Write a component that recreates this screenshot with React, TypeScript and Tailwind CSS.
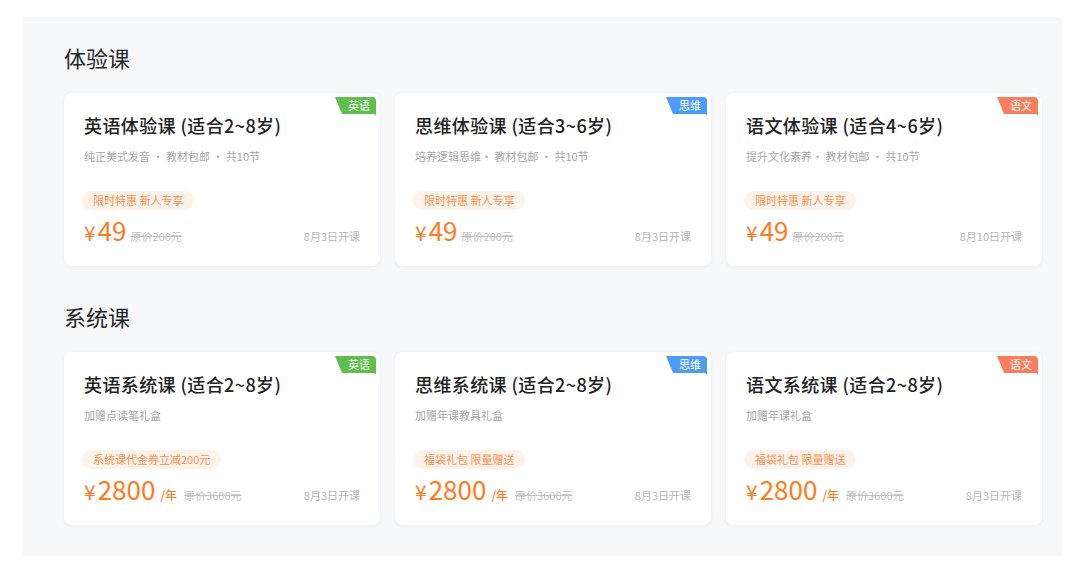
import React from "react";

type Course = {
  title: string;
  sub: string;
  pill: string;
  price: string;
  perYear?: boolean;
  orig: string;
  date: string;
  tag: string;
  tagColor: string;
};

const trial: Course[] = [
  { title: "英语体验课 (适合2~8岁)", sub: "纯正美式发音 · 教材包邮 · 共10节", pill: "限时特惠 新人专享", price: "49", orig: "原价200元", date: "8月3日开课", tag: "英语", tagColor: "#5fbf4e" },
  { title: "思维体验课 (适合3~6岁)", sub: "培养逻辑思维· 教材包邮 · 共10节", pill: "限时特惠 新人专享", price: "49", orig: "原价200元", date: "8月3日开课", tag: "思维", tagColor: "#4c9cf6" },
  { title: "语文体验课 (适合4~6岁)", sub: "提升文化素养· 教材包邮 · 共10节", pill: "限时特惠 新人专享", price: "49", orig: "原价200元", date: "8月10日开课", tag: "语文", tagColor: "#f97e5e" },
];

const system: Course[] = [
  { title: "英语系统课 (适合2~8岁)", sub: "加赠点读笔礼盒", pill: "系统课代金券立减200元", price: "2800", perYear: true, orig: "原价3600元", date: "8月3日开课", tag: "英语", tagColor: "#5fbf4e" },
  { title: "思维系统课 (适合2~8岁)", sub: "加赠年课教具礼盒", pill: "福袋礼包 限量赠送", price: "2800", perYear: true, orig: "原价3600元", date: "8月3日开课", tag: "思维", tagColor: "#4c9cf6" },
  { title: "语文系统课 (适合2~8岁)", sub: "加赠年课礼盒", pill: "福袋礼包 限量赠送", price: "2800", perYear: true, orig: "原价3600元", date: "8月3日开课", tag: "语文", tagColor: "#f97e5e" },
];

function Tag({ text, color }: { text: string; color: string }) {
  return (
    <div className="absolute top-[4px] right-[3px] w-[42px] h-[19px]">
      <svg width="42" height="19" viewBox="0 0 42 19" className="absolute inset-0">
        <path d="M0 0 H37 Q41 0 41 4 V19 Q40.5 17 38 17 H7 Z" fill={color} />
      </svg>
      <span className="absolute inset-0 flex items-center justify-center pl-[6px] pb-[2px] text-[11px] leading-none text-white">
        {text}
      </span>
    </div>
  );
}

function Card({ c }: { c: Course }) {
  return (
    <div className="relative bg-white rounded-[8px] shadow-[0_1px_4px_rgba(0,0,0,0.05)] h-[173px] pt-[20px] px-5">
      <Tag text={c.tag} color={c.tagColor} />
      <div className="text-[18px] leading-[24px] font-medium tracking-[0.4px] text-[#222]">{c.title}</div>
      <div className="mt-[11px] text-[11px] leading-[16px] text-[#a8a8a8]">{c.sub}</div>
      <div className="mt-[27px] -ml-[2px] inline-flex items-center h-[19px] px-[11px] rounded-full bg-[#fff2e8] text-[11px] text-[#f59358]">
        {c.pill}
      </div>
      <div className="mt-[5px] flex items-baseline h-[30px]">
        <span className="text-[21px] text-[#ff7b1c] mr-[2px]">¥</span>
        <span className="text-[26px] leading-[30px] text-[#ff7b1c]">{c.price}</span>
        {c.perYear && <span className="ml-[5px] text-[12px] font-medium text-[#ff7b1c]">/年</span>}
        <span className={(c.perYear ? "ml-[7px]" : "ml-[4px]") + " text-[11px] text-[#c2c2c2] line-through"}>{c.orig}</span>
        <span className="ml-auto text-[11px] text-[#b8b8b8]">{c.date}</span>
      </div>
    </div>
  );
}

function Section({ title, items, first }: { title: string; items: Course[]; first?: boolean }) {
  return (
    <div className={first ? "" : "mt-[35px]"}>
      <div className="text-[22px] leading-[30px] text-[#262626] mb-[21px]">{title}</div>
      <div className="grid grid-cols-3 gap-x-[15px]">
        {items.map((c, i) => (
          <Card key={i} c={c} />
        ))}
      </div>
    </div>
  );
}

export default function App() {
  return (
    <div
      className="w-[1080px] h-[574px] bg-white pt-[17px] pl-[23px]"
      style={{ fontFamily: '"Noto Sans CJK SC", "Noto Sans", sans-serif' }}
    >
      <div className="w-[1039px] h-[539px] bg-[#f7f8fa] pt-[25px] pl-[41px] pr-[20px]">
        <Section title="体验课" items={trial} first />
        <Section title="系统课" items={system} />
      </div>
    </div>
  );
}
